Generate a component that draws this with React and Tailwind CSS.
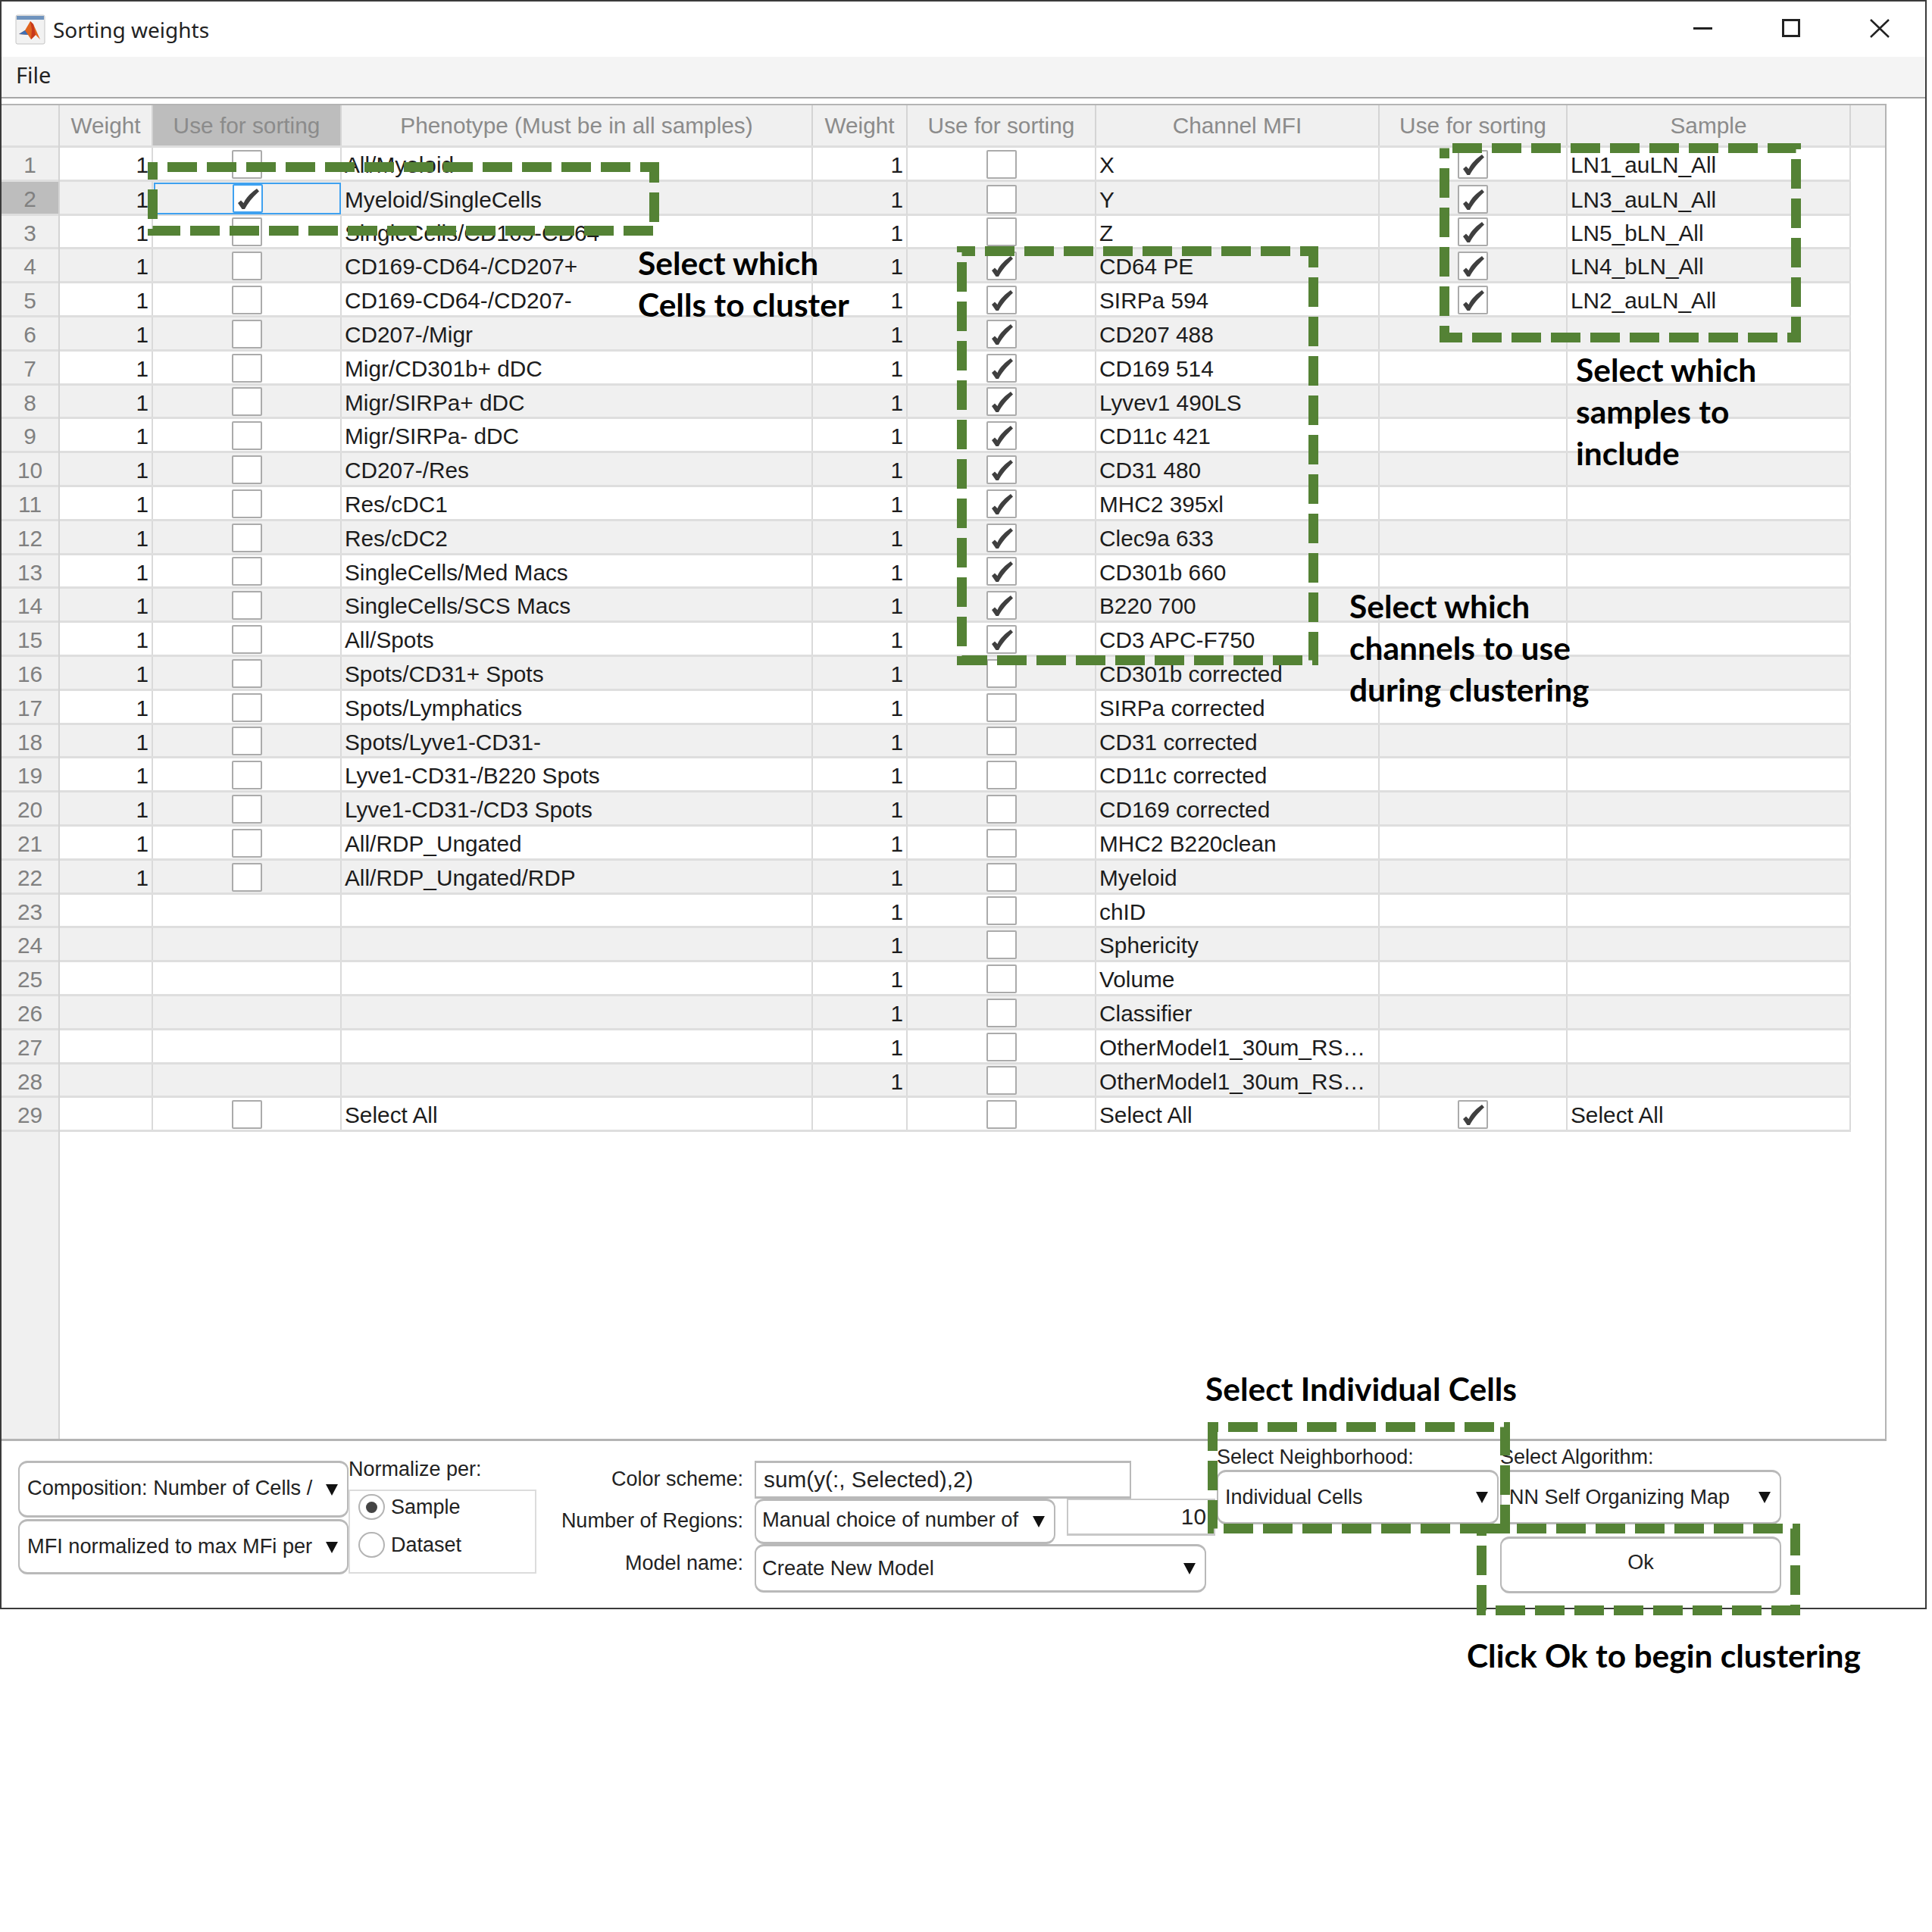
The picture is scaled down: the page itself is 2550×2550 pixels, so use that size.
import React from 'react';

const phenotypes = [
  'All/Myeloid', 'Myeloid/SingleCells', 'SingleCells/CD169-CD64-', 'CD169-CD64-/CD207+', 'CD169-CD64-/CD207-',
  'CD207-/Migr', 'Migr/CD301b+ dDC', 'Migr/SIRPa+ dDC', 'Migr/SIRPa- dDC', 'CD207-/Res', 'Res/cDC1', 'Res/cDC2',
  'SingleCells/Med Macs', 'SingleCells/SCS Macs', 'All/Spots', 'Spots/CD31+ Spots', 'Spots/Lymphatics',
  'Spots/Lyve1-CD31-', 'Lyve1-CD31-/B220 Spots', 'Lyve1-CD31-/CD3 Spots', 'All/RDP_Ungated', 'All/RDP_Ungated/RDP',
];

const channels = [
  'X', 'Y', 'Z', 'CD64 PE', 'SIRPa 594', 'CD207 488', 'CD169 514', 'Lyvev1 490LS', 'CD11c 421', 'CD31 480',
  'MHC2 395xl', 'Clec9a 633', 'CD301b 660', 'B220 700', 'CD3 APC-F750', 'CD301b corrected', 'SIRPa corrected',
  'CD31 corrected', 'CD11c corrected', 'CD169 corrected', 'MHC2 B220clean', 'Myeloid', 'chID', 'Sphericity',
  'Volume', 'Classifier', 'OtherModel1_30um_RS…', 'OtherModel1_30um_RS…',
];

const samples = ['LN1_auLN_All', 'LN3_auLN_All', 'LN5_bLN_All', 'LN4_bLN_All', 'LN2_auLN_All'];

const headers = ['Weight', 'Use for sorting', 'Phenotype (Must be in all samples)', 'Weight', 'Use for sorting', 'Channel MFI', 'Use for sorting', 'Sample'];

const gridCols = 'grid w-[2364px] grid-cols-[123px_249px_622px_125px_249px_374px_248px_374px]';

const MatlabIcon = () => (
  <svg width="40" height="40" viewBox="0 0 40 40">
    <rect x="1" y="1" width="38" height="38" rx="2" fill="#f2f2f2" stroke="#c4c4c4" />
    <rect x="2" y="2" width="36" height="5" fill="#6f93bd" />
    <path d="M5 26 L13 21 L20 9 L24 13 L33 33 L27 27 L21 33 L17 27 Z" fill="#e0641e" />
    <path d="M5 26 L13 21 L17 27 Z" fill="#3d6fb5" />
    <path d="M20 9 L24 13 L27 27 L21 33 L22 20 Z" fill="#c7381b" />
  </svg>
);

const Tick = () => (
  <svg width="40" height="38" viewBox="0 0 40 38" className="absolute left-[-2px] top-[-2px]">
    <path d="M7 25 L11 21.5 L14.5 25 C18 17 25 11 32 6 L35 9.5 C27 17 20 25 16 33 L12.5 33 Z" fill="#3f3f3f" />
  </svg>
);

const Check = ({ on, focus }) => (
  <div className={`relative w-[40px] h-[38px] rounded-[2px] border-2 bg-white ${focus ? 'border-[#3fa1f0]' : 'border-[#ababab]'}`}>
    {on && <Tick />}
  </div>
);

const TextCell = ({ children }) => (
  <div className="border-r-2 border-[#dadada] pl-[4px] pt-[4px] whitespace-nowrap overflow-hidden flex items-center">{children}</div>
);

const WeightCell = ({ show }) => (
  <div className="border-r-2 border-[#dadada] pr-[4px] pt-[4px] text-right flex items-center justify-end">{show ? '1' : ''}</div>
);

const CheckCell = ({ show, on, focus }) => (
  <div className={`flex items-center justify-center border-r-2 ${focus ? 'border-2 border-[#3fa1f0] m-[1px]' : 'border-[#dadada] pt-[2px]'}`}>
    {show && <Check on={on} focus={focus} />}
  </div>
);

const Row = ({ i }) => {
  const last = i === 28;
  const striped = i % 2 === 1;
  const phen = last ? 'Select All' : phenotypes[i];
  const chan = last ? 'Select All' : channels[i];
  const samp = last ? 'Select All' : samples[i];
  return (
    <div className={`${gridCols} h-[44.8px] border-b-[3px] border-[#dedede] ${striped ? 'bg-[#f0f0f0]' : 'bg-white'}`}>
      <WeightCell show={i < 22} />
      <CheckCell show={i < 22 || last} on={i === 1} focus={i === 1} />
      <TextCell>{phen}</TextCell>
      <WeightCell show={i < 28} />
      <CheckCell show on={i >= 3 && i <= 14} />
      <TextCell>{chan}</TextCell>
      <CheckCell show={i < 5 || last} on />
      <TextCell>{samp}</TextCell>
    </div>
  );
};

const Arrow = () => (
  <svg width="16" height="16" viewBox="0 0 16 16" className="shrink-0">
    <polygon points="0,1 16,1 8,16" fill="#111" />
  </svg>
);

const Dropdown = ({ children, className, textClass = '' }) => (
  <div className={`flex items-center justify-between rounded-[12px] border-2 border-t-[3px] border-b-[3px] border-[#b9b9b9] bg-white overflow-hidden whitespace-nowrap ${className}`}>
    <span className={textClass}>{children}</span>
    <Arrow />
  </div>
);

const Radio = ({ on, label }) => (
  <div className="flex items-center gap-[8px]">
    <div className="flex h-[34px] w-[35px] items-center justify-center rounded-full border-2 border-[#b4b4b4] bg-white">
      {on && <div className="h-[15px] w-[15px] rounded-full bg-[#444]" />}
    </div>
    <span>{label}</span>
  </div>
);

const Dashed = ({ className, w, h, offset }) => (
  <svg width={w} height={h} className={`absolute ${className}`}>
    <rect x="6.5" y="6.5" width={w - 13} height={h - 13} fill="none" stroke="#548235" strokeWidth="13" strokeDasharray="39 13" strokeDashoffset={offset} />
  </svg>
);

const Note = ({ className, children }) => (
  <div className={`absolute font-['Lato',sans-serif] font-bold text-[42.5px] leading-[55px] text-black whitespace-nowrap ${className}`}>
    {children}
  </div>
);

export default function App() {
  return (
    <div className="relative w-[2550px] h-[2550px] bg-white font-['Liberation_Sans',Arial,sans-serif] text-[#1c1c1c]">
      <div className="flex flex-col w-[2543px] h-[2124px] border-2 border-[#3a3a3a] bg-white">
        {/* Title bar */}
        <div className="flex items-center justify-between h-[73px] shrink-0 pl-[18px] pr-[47px]">
          <div className="flex items-center gap-[10px] font-['Noto_Sans',sans-serif] text-[28px] text-[#222]">
            <MatlabIcon />
            <span>Sorting weights</span>
          </div>
          <div className="flex items-center gap-[92px] pb-[3px]">
            <div className="w-[25px] h-[3px] bg-[#222]" />
            <div className="w-[24px] h-[24px] border-[3px] border-[#222]" />
            <svg width="26" height="25" viewBox="0 0 26 25"><path d="M1 1 L25 24 M25 1 L1 24" stroke="#222" strokeWidth="2.5" /></svg>
          </div>
        </div>

        {/* Menu */}
        <div className="flex items-center h-[55px] shrink-0 bg-[#f4f4f4] border-b-2 border-[#a6a6a6] pl-[19px] pb-[5px] font-['Noto_Sans',sans-serif] text-[29px] text-[#222]">
          File
        </div>

        {/* Table */}
        <div className="mt-[7px] flex w-[2488px] h-[1765px] shrink-0 border-t-2 border-r-2 border-b-[3px] border-[#b4b4b4] text-[29.8px] leading-none">
          <div className="flex flex-col w-[77px] shrink-0 bg-[#f0f0f0] border-r-2 border-[#d4d4d4] text-[#808080]">
            <div className="h-[56px] shrink-0 border-b-[3px] border-[#dedede]" />
            {Array.from({ length: 29 }, (_, i) => (
              <div key={i} className={`flex h-[44.8px] shrink-0 items-center justify-center pt-[4px] border-b-[3px] border-[#dedede] ${i === 1 ? 'bg-[#bdbdbd]' : ''}`}>
                {i + 1}
              </div>
            ))}
          </div>
          <div className="flex-1 flex flex-col">
            <div className="flex h-[56px] shrink-0 bg-[#f0f0f0] border-b-[3px] border-[#dedede] text-[#8b8b8b]">
              <div className={gridCols}>
                {headers.map((h, i) => (
                  <div key={i} className={`flex items-center justify-center border-r-2 border-[#d4d4d4] ${i === 1 ? 'bg-[#bdbdbd]' : ''}`}>{h}</div>
                ))}
              </div>
            </div>
            <div>
              {Array.from({ length: 29 }, (_, i) => <Row key={i} i={i} />)}
            </div>
          </div>
        </div>

        {/* Controls */}
        <div className="flex items-start flex-1 pl-[22px] text-[27px] leading-none text-[#222]">
          <div className="flex flex-col gap-[2px] w-[436px] shrink-0 pt-[26px] text-[27.2px]">
            <Dropdown className="h-[75px] pl-[10px] pr-[12px]" textClass="pb-[4px]">Composition: Number of Cells /</Dropdown>
            <Dropdown className="h-[73px] pl-[10px] pr-[12px]" textClass="pb-[2px]">MFI normalized to max MFi per</Dropdown>
          </div>
          <div className="w-[248px] shrink-0 pt-[24px]">
            <div className="h-[40px]">Normalize per:</div>
            <div className="flex flex-col gap-[16px] h-[111px] pt-[4px] pl-[11px] border-2 border-[#dcdcdc] bg-white">
              <Radio on label="Sample" />
              <Radio label="Dataset" />
            </div>
          </div>
          <div className="grid grid-cols-[273px_610px] gap-x-[15px] w-[898px] shrink-0 pt-[26px]">
            <div className="flex h-[50px] items-center justify-end pb-[2px]">Color scheme:</div>
            <div className="flex h-[50px] w-[497px] items-center border-2 border-t-[3px] border-b-[3px] border-[#b9b9b9] pl-[10px] text-[29.8px]">sum(y(:, Selected),2)</div>
            <div className="flex h-[60px] items-center justify-end pb-[2px]">Number of Regions:</div>
            <div className="flex items-start gap-[15px]">
              <Dropdown className="h-[60px] w-[397px] pl-[8px] pr-[12px] text-[27.4px]" textClass="pb-[5px]">Manual choice of number of</Dropdown>
              <div className="flex h-[49px] w-[196px] items-center justify-end border-2 border-b-[3px] border-[#c8c8c8] pr-[10px] text-[29.8px]">10</div>
            </div>
            <div className="flex h-[64px] items-center justify-end pb-[14px]">Model name:</div>
            <Dropdown className="h-[64px] w-[596px] pl-[8px] pr-[12px] text-[27.4px]">Create New Model</Dropdown>
          </div>
          <div className="w-[374px] shrink-0">
            <div className="flex h-[38px] items-end pb-[3px]">Select Neighborhood:</div>
            <Dropdown className="h-[72px] w-[372px] pl-[9px] pr-[12px]">Individual Cells</Dropdown>
          </div>
          <div className="w-[371px] shrink-0">
            <div className="flex h-[38px] items-end pb-[3px]">Select Algorithm:</div>
            <Dropdown className="h-[72px] pl-[10px] pr-[12px]">NN Self Organizing Map</Dropdown>
            <div className="mt-[16px] flex h-[75px] items-center justify-center rounded-[12px] border-2 border-t-[3px] border-b-[3px] border-[#b9b9b9] bg-white pb-[6px]">Ok</div>
          </div>
        </div>
      </div>

      {/* Annotations laid over the window */}
      <Dashed className="left-[195px] top-[214px]" w={675} h={97} offset={32.5} />
      <Dashed className="left-[1900px] top-[189px]" w={477} h={263} offset={41.5} />
      <Dashed className="left-[1263px] top-[325px]" w={477} h={553} offset={21.5} />
      <Dashed className="left-[1594px] top-[1877px]" w={399} h={147} offset={31.5} />
      <Dashed className="left-[1949px] top-[2011px]" w={427} h={121} offset={5.5} />

      <Note className="left-[842px] top-[319px]">Select which<br />Cells to cluster</Note>
      <Note className="left-[2080px] top-[460px]">Select which<br />samples to<br />include</Note>
      <Note className="left-[1781px] top-[772px]">Select which<br />channels to use<br />during clustering</Note>
      <Note className="left-[1591px] top-[1805px]">Select Individual Cells</Note>
      <Note className="left-[1936px] top-[2157px]">Click Ok to begin clustering</Note>
    </div>
  );
}
